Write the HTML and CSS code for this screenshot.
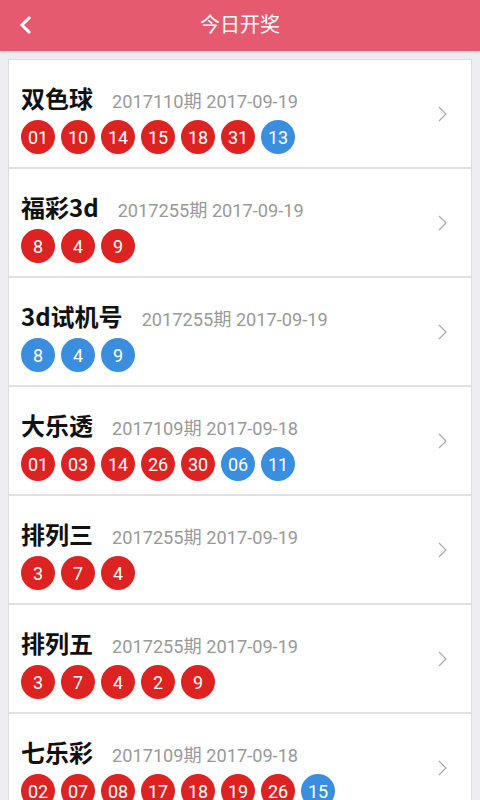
FILE: index.html
```html
<!DOCTYPE html>
<html lang="zh">
<head>
<meta charset="utf-8">
<title>今日开奖</title>
<link rel="stylesheet" href="styles.css">
</head>
<body>
<header class="topbar">
  <svg class="back" width="14" height="20" viewBox="0 0 14 20"><path d="M11 2 L3 10 L11 18" fill="none" stroke="#fff" stroke-width="3"/></svg>
  <h1 class="title">今日开奖</h1>
</header>
<main class="list">
  <div class="row">
    <div class="info">
      <div class="head"><span class="name">双色球</span><span class="date">2017110期 2017-09-19</span></div>
      <div class="balls"><span class="ball">01</span><span class="ball">10</span><span class="ball">14</span><span class="ball">15</span><span class="ball">18</span><span class="ball">31</span><span class="ball blue">13</span></div>
    </div>
    <svg class="arrow" width="9" height="16" viewBox="0 0 9 16"><path d="M1 1 L8 8 L1 15" fill="none" stroke="#aaa" stroke-width="1.2"/></svg>
  </div>
  <div class="row">
    <div class="info">
      <div class="head"><span class="name">福彩3d</span><span class="date">2017255期 2017-09-19</span></div>
      <div class="balls"><span class="ball">8</span><span class="ball">4</span><span class="ball">9</span></div>
    </div>
    <svg class="arrow" width="9" height="16" viewBox="0 0 9 16"><path d="M1 1 L8 8 L1 15" fill="none" stroke="#aaa" stroke-width="1.2"/></svg>
  </div>
  <div class="row">
    <div class="info">
      <div class="head"><span class="name">3d试机号</span><span class="date">2017255期 2017-09-19</span></div>
      <div class="balls"><span class="ball blue">8</span><span class="ball blue">4</span><span class="ball blue">9</span></div>
    </div>
    <svg class="arrow" width="9" height="16" viewBox="0 0 9 16"><path d="M1 1 L8 8 L1 15" fill="none" stroke="#aaa" stroke-width="1.2"/></svg>
  </div>
  <div class="row">
    <div class="info">
      <div class="head"><span class="name">大乐透</span><span class="date">2017109期 2017-09-18</span></div>
      <div class="balls"><span class="ball">01</span><span class="ball">03</span><span class="ball">14</span><span class="ball">26</span><span class="ball">30</span><span class="ball blue">06</span><span class="ball blue">11</span></div>
    </div>
    <svg class="arrow" width="9" height="16" viewBox="0 0 9 16"><path d="M1 1 L8 8 L1 15" fill="none" stroke="#aaa" stroke-width="1.2"/></svg>
  </div>
  <div class="row">
    <div class="info">
      <div class="head"><span class="name">排列三</span><span class="date">2017255期 2017-09-19</span></div>
      <div class="balls"><span class="ball">3</span><span class="ball">7</span><span class="ball">4</span></div>
    </div>
    <svg class="arrow" width="9" height="16" viewBox="0 0 9 16"><path d="M1 1 L8 8 L1 15" fill="none" stroke="#aaa" stroke-width="1.2"/></svg>
  </div>
  <div class="row">
    <div class="info">
      <div class="head"><span class="name">排列五</span><span class="date">2017255期 2017-09-19</span></div>
      <div class="balls"><span class="ball">3</span><span class="ball">7</span><span class="ball">4</span><span class="ball">2</span><span class="ball">9</span></div>
    </div>
    <svg class="arrow" width="9" height="16" viewBox="0 0 9 16"><path d="M1 1 L8 8 L1 15" fill="none" stroke="#aaa" stroke-width="1.2"/></svg>
  </div>
  <div class="row">
    <div class="info">
      <div class="head"><span class="name">七乐彩</span><span class="date">2017109期 2017-09-18</span></div>
      <div class="balls"><span class="ball">02</span><span class="ball">07</span><span class="ball">08</span><span class="ball">17</span><span class="ball">18</span><span class="ball">19</span><span class="ball">26</span><span class="ball blue">15</span></div>
    </div>
    <svg class="arrow" width="9" height="16" viewBox="0 0 9 16"><path d="M1 1 L8 8 L1 15" fill="none" stroke="#aaa" stroke-width="1.2"/></svg>
  </div>
</main>
</body>
</html>
```
FILE: styles.css
```css
html, body {
  margin: 0;
  padding: 0;
}
body {
  width: 480px;
  height: 800px;
  overflow: hidden;
  background: #eeeef2;
  font-family: Roboto, "Noto Sans CJK SC", sans-serif;
}
.topbar {
  height: 51px;
  background: #e65a70;
  display: flex;
  align-items: center;
  justify-content: center;
  position: relative;
  box-shadow: 0 1px 3px rgba(0,0,0,0.18);
}
.back {
  position: absolute;
  left: 19px;
  top: 15px;
}
.title {
  margin: 0;
  color: #fff;
  font-family: "Noto Sans CJK SC", sans-serif;
  font-weight: 400;
  font-size: 20px;
  line-height: 51px;
  padding-bottom: 4px;
}
.list {
  margin: 8px 8px 0 8px;
  background: #fff;
  border: 1px solid #dcdcdc;
  border-bottom: none;
}
.row {
  height: 107px;
  display: flex;
  align-items: center;
  padding-left: 12px;
  padding-right: 24px;
  border-bottom: 2px solid #e0e0e0;
}
.info {
  flex: 1;
  display: flex;
  flex-direction: column;
  gap: 7px;
  padding-top: 10px;
}
.head {
  display: flex;
  align-items: baseline;
  height: 30px;
}
.name {
  font-family: "Noto Sans CJK SC", sans-serif;
  font-weight: 700;
  font-size: 24px;
  line-height: 30px;
  color: #111;
  margin-right: 19px;
}
.date {
  font-family: Roboto, "Noto Sans CJK SC", sans-serif;
  font-size: 18.2px;
  color: #999;
}
.balls {
  display: flex;
  gap: 6px;
}
.ball {
  width: 34px;
  height: 34px;
  border-radius: 50%;
  background: #dd2222;
  color: #fff;
  font-family: Roboto, sans-serif;
  font-size: 18px;
  display: flex;
  align-items: center;
  justify-content: center;
}
.ball.blue {
  background: #3a8ee0;
}
.arrow {
  flex: none;
}
```
